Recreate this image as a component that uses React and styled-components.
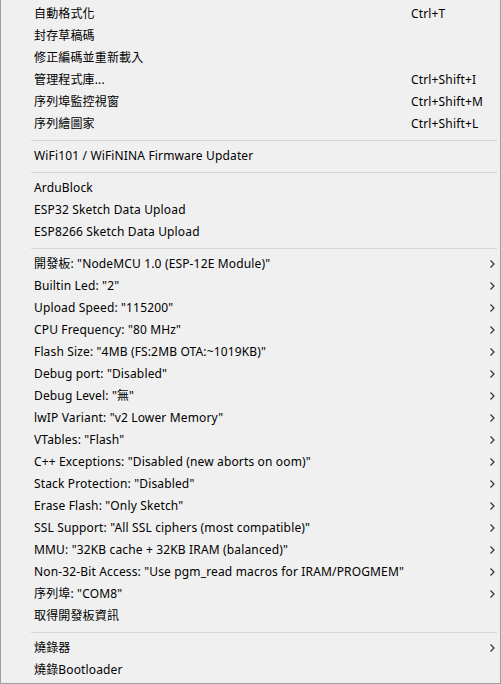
import React from 'react';
import styled, { createGlobalStyle } from 'styled-components';

const GlobalStyle = createGlobalStyle`
    html, body {
        margin: 0;
        padding: 0;
        background: #f0f0f0;
    }
`

const Menu = styled.div`
    box-sizing: border-box;
    width: 501px;
    height: 684px;
    padding: 3px 0 3px 0;
    background: #f0f0f0;
    border-left: 1px solid #a0a0a0;
    border-right: 1px solid #a0a0a0;
    border-bottom: 1px solid #a0a0a0;
    font-family: "Noto Sans", "Noto Sans CJK TC", sans-serif;
    font-size: 12px;
    letter-spacing: 0.15px;
    color: #000;
    overflow: hidden;
`

const Row = styled.div`
    display: grid;
    grid-template-columns: 1fr 77px 12px;
    align-items: center;
    height: 22px;
    padding-left: 33px;
    white-space: nowrap;
`

const Label = styled.span`
    line-height: 22px;
`

const Shortcut = styled.span`
    line-height: 22px;
`

const ArrowCell = styled.span`
    display: flex;
    align-items: center;
    padding-left: 2px;
`

const Separator = styled.div`
    height: 1px;
    margin: 5px 3px 4px 30px;
    background: #d7d7d7;
`

const Chevron = () => (
    <svg width="5" height="8" viewBox="0 0 5 8">
        <path d="M0.5 0.5 L4 4 L0.5 7.5" fill="none" stroke="#333" strokeWidth="1.2" />
    </svg>
)

const groups = [
    [
        { label: '自動格式化', shortcut: 'Ctrl+T' },
        { label: '封存草稿碼' },
        { label: '修正編碼並重新載入' },
        { label: '管理程式庫...', shortcut: 'Ctrl+Shift+I' },
        { label: '序列埠監控視窗', shortcut: 'Ctrl+Shift+M' },
        { label: '序列繪圖家', shortcut: 'Ctrl+Shift+L' },
    ],
    [
        { label: 'WiFi101 / WiFiNINA Firmware Updater' },
    ],
    [
        { label: 'ArduBlock' },
        { label: 'ESP32 Sketch Data Upload' },
        { label: 'ESP8266 Sketch Data Upload' },
    ],
    [
        { label: '開發板: "NodeMCU 1.0 (ESP-12E Module)"', sub: true },
        { label: 'Builtin Led: "2"', sub: true },
        { label: 'Upload Speed: "115200"', sub: true },
        { label: 'CPU Frequency: "80 MHz"', sub: true },
        { label: 'Flash Size: "4MB (FS:2MB OTA:~1019KB)"', sub: true },
        { label: 'Debug port: "Disabled"', sub: true },
        { label: 'Debug Level: "無"', sub: true },
        { label: 'lwIP Variant: "v2 Lower Memory"', sub: true },
        { label: 'VTables: "Flash"', sub: true },
        { label: 'C++ Exceptions: "Disabled (new aborts on oom)"', sub: true },
        { label: 'Stack Protection: "Disabled"', sub: true },
        { label: 'Erase Flash: "Only Sketch"', sub: true },
        { label: 'SSL Support: "All SSL ciphers (most compatible)"', sub: true },
        { label: 'MMU: "32KB cache + 32KB IRAM (balanced)"', sub: true },
        { label: 'Non-32-Bit Access: "Use pgm_read macros for IRAM/PROGMEM"', sub: true },
        { label: '序列埠: "COM8"', sub: true },
        { label: '取得開發板資訊' },
    ],
    [
        { label: '燒錄器', sub: true },
        { label: '燒錄Bootloader' },
    ],
]

const MenuRow = ({ label, shortcut, sub }) => (
    <Row>
        <Label>{label}</Label>
        <Shortcut>{shortcut}</Shortcut>
        <ArrowCell>{sub && <Chevron />}</ArrowCell>
    </Row>
)

export default function App() {
    return (
        <>
            <GlobalStyle />
            <Menu>
                {groups.map((items, gi) => (
                    <React.Fragment key={gi}>
                        {gi > 0 && <Separator />}
                        {items.map((item, i) => <MenuRow key={i} {...item} />)}
                    </React.Fragment>
                ))}
            </Menu>
        </>
    )
}
